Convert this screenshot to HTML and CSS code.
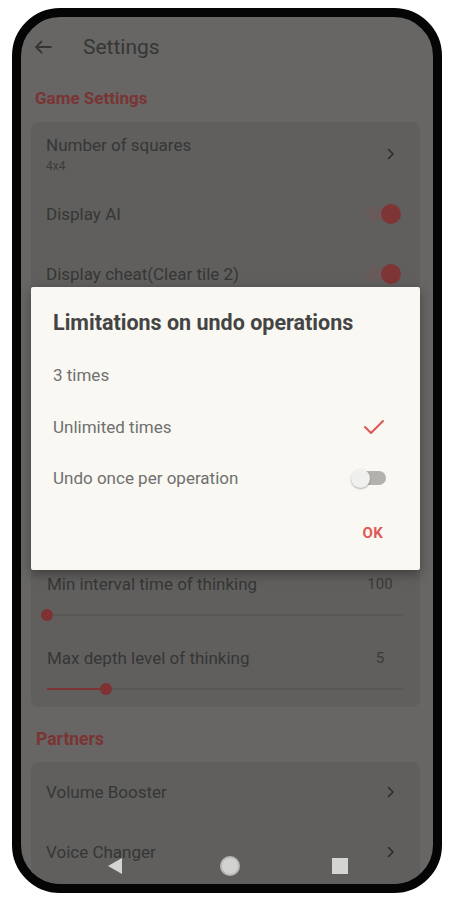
FILE: index.html
```html
<!DOCTYPE html>
<html lang="en">
<head>
<meta charset="utf-8">
<title>Settings</title>
<link rel="stylesheet" href="styles.css">
</head>
<body>
<div class="phone">
  <div class="screen">
    <header class="header">
      <svg class="back" width="18" height="14" viewBox="0 0 18 14"><path d="M17 7H2M7.5 1.5L2 7l5.5 5.5" fill="none" stroke="#353535" stroke-width="1.8" stroke-linecap="round" stroke-linejoin="round"/></svg>
      <h1 class="title">Settings</h1>
    </header>

    <h2 class="section-title">Game Settings</h2>
    <div class="card">
      <div class="row row-tall">
        <div class="row-text">
          <div class="row-label">Number of squares</div>
          <div class="row-sub">4x4</div>
        </div>
        <svg class="chev" width="8" height="12" viewBox="0 0 8 12"><path d="M1.5 1.5L6 6l-4.5 4.5" fill="none" stroke="#2c2c2c" stroke-width="1.6" stroke-linecap="round" stroke-linejoin="round"/></svg>
      </div>
      <div class="row">
        <div class="row-label">Display AI</div>
        <span class="switch on"><span class="knob"></span></span>
      </div>
      <div class="row">
        <div class="row-label">Display cheat(Clear tile 2)</div>
        <span class="switch on"><span class="knob"></span></span>
      </div>
      <div class="card-gap"></div>
      <div class="slider-block">
        <div class="slider-head">
          <div class="row-label">Min interval time of thinking</div>
          <div class="slider-value">100</div>
        </div>
        <div class="slider">
          <div class="track"><div class="fill" style="width:0px"></div><span class="thumb" style="left:0px"></span></div>
        </div>
      </div>
      <div class="slider-block">
        <div class="slider-head">
          <div class="row-label">Max depth level of thinking</div>
          <div class="slider-value">5</div>
        </div>
        <div class="slider">
          <div class="track"><div class="fill" style="width:59px"></div><span class="thumb" style="left:59px"></span></div>
        </div>
      </div>
    </div>

    <h2 class="section-title partners">Partners</h2>
    <div class="card">
      <div class="row">
        <div class="row-label">Volume Booster</div>
        <svg class="chev" width="8" height="12" viewBox="0 0 8 12"><path d="M1.5 1.5L6 6l-4.5 4.5" fill="none" stroke="#2c2c2c" stroke-width="1.6" stroke-linecap="round" stroke-linejoin="round"/></svg>
      </div>
      <div class="row">
        <div class="row-label">Voice Changer</div>
        <svg class="chev" width="8" height="12" viewBox="0 0 8 12"><path d="M1.5 1.5L6 6l-4.5 4.5" fill="none" stroke="#2c2c2c" stroke-width="1.6" stroke-linecap="round" stroke-linejoin="round"/></svg>
      </div>
    </div>

    <div class="dialog">
      <h3 class="dialog-title">Limitations on undo operations</h3>
      <div class="options">
        <div class="option">3 times</div>
        <div class="option">Unlimited times
          <svg class="check" width="22" height="16" viewBox="0 0 22 16"><path d="M2 8l6 6L20 2" fill="none" stroke="#e05656" stroke-width="2" stroke-linecap="round" stroke-linejoin="round"/></svg>
        </div>
        <div class="option option-short">Undo once per operation
          <span class="switch off"><span class="knob"></span></span>
        </div>
      </div>
      <div class="actions"><span class="ok">OK</span></div>
    </div>

    <nav class="navbar">
      <svg width="18" height="18" viewBox="0 0 18 18"><path d="M16 1v16L2 9z" fill="#d4d4d2"/></svg>
      <span class="home"></span>
      <span class="recent"></span>
    </nav>
  </div>
</div>
</body>
</html>
```

FILE: styles.css
```css
* { box-sizing: border-box; }
html, body { margin: 0; padding: 0; background: #ffffff; }
body { font-family: Roboto, "Liberation Sans", sans-serif; }

.phone {
  width: 430px;
  height: 885px;
  margin: 8px 0 0 12px;
  border: 9px solid #050505;
  border-radius: 48px;
  overflow: hidden;
  background: #676664;
}
.screen {
  position: relative;
  height: 100%;
  display: flex;
  flex-direction: column;
}

.header {
  height: 60px;
  display: flex;
  align-items: center;
  padding-left: 13px;
  flex-shrink: 0;
}
.back { display: block; }
.title {
  margin: 0 0 0 31px;
  font-size: 21px;
  font-weight: 400;
  color: #363636;
}

.section-title {
  margin: 6px 0 9px;
  height: 30px;
  line-height: 30px;
  padding-left: 14px;
  font-size: 17px;
  font-weight: 700;
  color: #7a3434;
  flex-shrink: 0;
}
.section-title.partners { margin-top: 17px; margin-bottom: 8px; padding-left: 15px; font-size: 17.5px; }

.card {
  margin: 0 13px 0 10px;
  background: #605f5d;
  border-radius: 8px;
  flex-shrink: 0;
  padding-bottom: 3px;
}
.row {
  height: 60px;
  display: flex;
  align-items: center;
  justify-content: space-between;
  padding: 0 20px 0 15px;
}
.row-tall { height: 62px; padding-right: 25px; padding-top: 2px; }
.row-text { display: flex; flex-direction: column; }
.row-label { font-size: 17px; color: #363636; line-height: 20px; }
.row-sub { font-size: 12px; color: #3c3c3c; line-height: 14px; margin-top: 4px; }
.chev { display: block; margin-right: 5px; }
.row-tall .chev { margin-right: 0; }

.switch {
  position: relative;
  display: block;
  width: 34px;
  height: 14px;
  border-radius: 7px;
}
.switch .knob {
  position: absolute;
  top: 50%;
  width: 20px;
  height: 20px;
  margin-top: -10px;
  border-radius: 50%;
}
.switch.on { background: #6a5b5b; }
.switch.on .knob { right: -1px; background: #7f3535; }
.switch.off { background: #b3b2ad; width: 32px; }
.switch.off .knob { left: -3px; width: 19px; height: 19px; margin-top: -9.5px; background: #f0f0ee; box-shadow: 0 1px 2px rgba(0,0,0,0.3); }

.card-gap { height: 264px; }

.slider-block { padding: 0 16px; margin-bottom: 12px; }
.slider-block:last-child { margin-bottom: 0; }
.slider-head {
  height: 32px;
  display: flex;
  align-items: center;
  justify-content: space-between;
}
.slider-value {
  width: 40px;
  text-align: center;
  font-size: 15px;
  color: #3a3a3a;
  margin-right: 4px;
}
.slider { height: 30px; display: flex; align-items: center; }
.track {
  position: relative;
  width: 100%;
  height: 2px;
  background: #585755;
}
.fill { height: 2px; background: #7f3233; }
.thumb {
  position: absolute;
  top: -5px;
  width: 12px;
  height: 12px;
  margin-left: -6px;
  border-radius: 50%;
  background: #7f3233;
}
.slider-block:first-of-type .thumb { margin-left: -5px; }

.dialog {
  position: absolute;
  left: 10px;
  top: 270px;
  width: 389px;
  height: 283px;
  background: #f9f8f2;
  border-radius: 2px;
  box-shadow: 0 4px 12px rgba(0,0,0,0.35);
  padding: 24px 34px 17px 22px;
  display: flex;
  flex-direction: column;
}
.dialog-title {
  margin: 0 0 14px;
  font-size: 21.5px;
  line-height: 24px;
  font-weight: 700;
  color: #444444;
  white-space: nowrap;
}
.options { display: flex; flex-direction: column; }
.option {
  height: 52px;
  display: flex;
  align-items: center;
  justify-content: space-between;
  font-size: 17px;
  color: #707070;
}
.option-short { height: 50px; }
.check { display: block; margin-right: 1px; }
.actions {
  margin-top: 10px;
  height: 40px;
  display: flex;
  align-items: center;
  justify-content: flex-end;
}
.ok { font-size: 15px; font-weight: 700; color: #e05858; margin-right: 3px; letter-spacing: 0.3px; }

.navbar {
  position: absolute;
  left: 0;
  right: 0;
  bottom: 0;
  height: 36px;
  display: flex;
  align-items: center;
  justify-content: center;
  gap: 92px;
}
.navbar svg { display: block; margin-right: 4px; }
.home {
  width: 20px;
  height: 20px;
  border-radius: 50%;
  background: #d2d2d0;
  border: 2px solid #b9b9b7;
}
.recent {
  width: 16px;
  height: 16px;
  background: #d4d4d2;
}
```
